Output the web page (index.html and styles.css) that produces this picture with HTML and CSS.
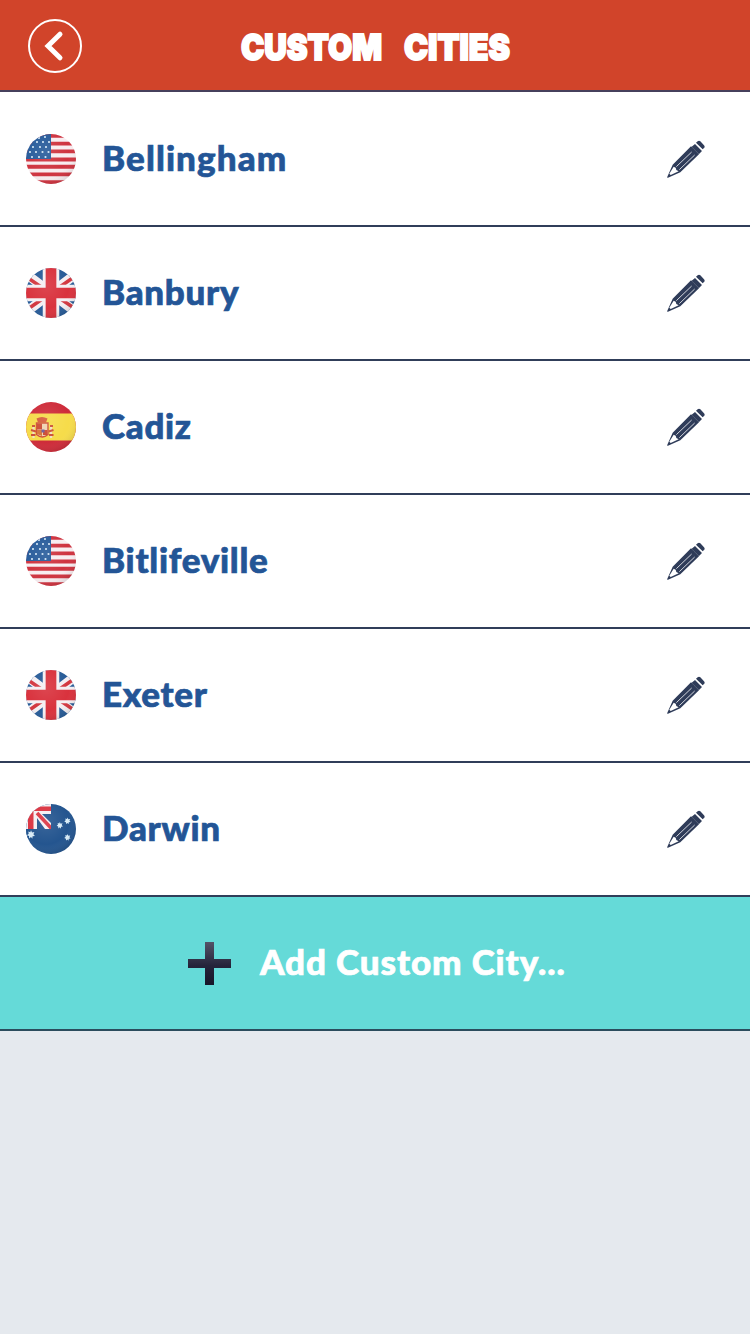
FILE: index.html
```html
<!DOCTYPE html>
<html lang="en">
<head>
	<meta charset="utf-8">
	<title>Custom Cities</title>
	<link rel="stylesheet" href="styles.css">
</head>
<body>
	<!-- shared icons -->
	<svg class="sprite" width="0" height="0">
		<defs>
			<clipPath id="round"><circle cx="25" cy="25" r="25"/></clipPath>
			<radialGradient id="shade" cx=".4" cy=".35" r=".7">
				<stop offset="0" stop-color="#fff" stop-opacity=".1"/>
				<stop offset=".65" stop-color="#fff" stop-opacity="0"/>
				<stop offset="1" stop-color="#000" stop-opacity=".12"/>
			</radialGradient>
			<linearGradient id="dark" x1="0" y1="0" x2="0" y2="1">
				<stop offset="0" stop-color="#535367"/>
				<stop offset=".55" stop-color="#25243a"/>
				<stop offset="1" stop-color="#171629"/>
			</linearGradient>
		</defs>
		<symbol id="us" viewBox="0 0 50 50">
			<g clip-path="url(#round)">
				<path fill="#f8edf0" d="M0 0h50v50H0z"/>
				<path stroke="#cf3440" stroke-width="3.85" d="M0 1.9h50M0 9.6h50M0 17.3h50M0 25.500h50M0 32.7h50M0 40.4h50M0 48.1h50"/>
				<path fill="#285c9b" d="M0 0h25v25H0z"/>
				<path stroke="#d3e6f5" stroke-width="2.2" stroke-linecap="round" d="M19 3h0M11 8h0M17 8h0M23 8h0M7 13h0M14 13h0M20 13h0M4 18h0M10 18h0M16.500 18h0M22.500 18h0M6 23h0M13 23h0M19.500 23h0M13 4h0"/>
				<path fill="url(#shade)" d="M0 0h50v50H0z"/>
			</g>
		</symbol>
		<symbol id="uk" viewBox="0 0 50 50">
			<g clip-path="url(#round)">
				<path fill="#285c98" d="M0 0h50v50H0z"/>
				<path stroke="#f4eff2" stroke-width="9.500" d="M-5 2l60 46M55 2L-5 48"/>
				<path stroke="#d33840" stroke-width="3.400" d="M2 10l14 9.500M48 40L34 30.500M48 9L33 19.500M2 41l15-10.500"/>
				<path stroke="#f4eff2" stroke-width="16.500" d="M25 0v50M0 25h50"/>
				<path stroke="#d9323d" stroke-width="10.700" d="M25 0v50M0 25h50"/>
				<path fill="url(#shade)" d="M0 0h50v50H0z"/>
			</g>
		</symbol>
		<symbol id="es" viewBox="0 0 50 50">
			<g clip-path="url(#round)">
				<path fill="#ce2c3a" d="M0 0h50v50H0z"/>
				<path fill="#f6dc4a" d="M0 11.500h50v27H0z"/>
				<path fill="#d65b39" d="M10.500 16.500q5.500-3 11 0l-1.500 4h-8z"/>
				<path fill="#f0d2b0" stroke="#cf5035" stroke-width="1.400" d="M10.500 21h11.500v11.500q-5.700 5-11.500 0z"/>
				<path fill="#cc4a32" d="M11 21.500h5v6h-5zM17 28h4.500v5H17z"/>
				<path fill="#d77537" d="M11 28h5v6l-5-2z"/>
				<path fill="#6e5a99" d="M15.500 27.500h3v3h-3z"/>
				<path fill="none" stroke="#f0e0c4" stroke-width="2.200" d="M7.500 24v12M25 24v12"/>
				<path fill="none" stroke="#cd5137" stroke-width="1.900" d="M5 28l5 1.500M5 33h4.500M22.500 29.500l5-1.500M23 33h4.500M6 24h3M24 24h3"/>
				<path fill="url(#shade)" d="M0 0h50v50H0z"/>
			</g>
		</symbol>
		<symbol id="au" viewBox="0 0 50 50">
			<g clip-path="url(#round)">
				<path fill="#24558f" d="M0 0h50v50H0z"/>
				<path fill="#f5eff2" d="M0 0h25v10H9.500v15H0z"/>
				<path fill="#db3441" d="M0 2.500h25V7H7.500v18H2V7H0z"/>
				<path fill="#f5eff2" d="M8 8h6l11 11v6h-6L11 14v11H8z"/>
				<path stroke="#db3441" stroke-width="3.600" d="M11 9l14.500 15.500"/>
				<path fill="#24558f" d="M25 2h10v32H0v-9h25z"/>
				<path id="star" fill="#d9ecf7" d="M5 26.300l1 2.200 2.400-.5-1 2.200 1.500 1.800-2.300.3-.3 2.400L5 33l-1.800 1.500-.2-2.400-2-.9 1.700-1.400-.4-2.200 2 .6z"/>
				<use href="#star" transform="translate(29.800 -3.100) scale(.8)"/>
				<use href="#star" transform="translate(37.500 -7.500) scale(.8)"/>
				<use href="#star" transform="translate(37.500 9) scale(.8)"/>
				<path fill="url(#shade)" d="M0 0h50v50H0z"/>
			</g>
		</symbol>
		<symbol id="pencil" viewBox="38 32 114 114">
			<path fill="#2f3c59" d="M130 36q4-4 8 0l11 12q4 4 0 8l-4 4-20-20zM122 44l21 21-9 9-22-22zM110 51l24 24-56 54-37 16q-4 1-2-3l16-36z"/>
			<path fill="#fff" d="M58 112l6 3 2 7 7 4-24 11-4-4z"/>
			<path stroke="#d2d5dd" stroke-width="3" d="M66 112l46-44M75 121l46-44"/>
		</symbol>
	</svg>

	<div class="header">
		<svg class="back" viewBox="0 0 54 54">
			<circle cx="27" cy="27" r="26"/>
			<path d="M32 15.200L20 27l12 11.800"/>
		</svg>
		<svg class="title" viewBox="0 0 300 60">
			<text x="16" y="43" textLength="141" lengthAdjust="spacingAndGlyphs">CUSTOM</text>
			<text x="179" y="43" textLength="106" lengthAdjust="spacingAndGlyphs">CITIES</text>
		</svg>
	</div>

	<div class="cities">
		<div class="city">
			<svg class="flag"><use href="#us"/></svg>
			<span class="name">Bellingham</span>
			<svg class="edit"><use href="#pencil"/></svg>
		</div>
		<div class="city">
			<svg class="flag"><use href="#uk"/></svg>
			<span class="name">Banbury</span>
			<svg class="edit"><use href="#pencil"/></svg>
		</div>
		<div class="city">
			<svg class="flag"><use href="#es"/></svg>
			<span class="name">Cadiz</span>
			<svg class="edit"><use href="#pencil"/></svg>
		</div>
		<div class="city">
			<svg class="flag"><use href="#us"/></svg>
			<span class="name">Bitlifeville</span>
			<svg class="edit"><use href="#pencil"/></svg>
		</div>
		<div class="city">
			<svg class="flag"><use href="#uk"/></svg>
			<span class="name">Exeter</span>
			<svg class="edit"><use href="#pencil"/></svg>
		</div>
		<div class="city">
			<svg class="flag"><use href="#au"/></svg>
			<span class="name">Darwin</span>
			<svg class="edit"><use href="#pencil"/></svg>
		</div>
	</div>

	<div class="add">
		<svg class="plus" viewBox="0 0 43 43">
			<path fill="url(#dark)" d="M17 0h9v17h17v9H26v17h-9V26H0v-9h17z"/>
		</svg>
		<span class="label">Add Custom City...</span>
	</div>
</body>
</html>
```
FILE: styles.css
```css
body {
	margin: 0;
	background-color: #e5e9ee;
	font-family: Lato, sans-serif;
	font-size: 35px;
	font-weight: 900;
}

.sprite {
	display: block;
}

.header {
	display: flex;
	align-items: center;
	height: 90px;
	padding: 0 28px;
	background-color: #d1442a;
	border-bottom: 2px solid #46405c;
}

.back {
	width: 54px;
	height: 54px;
	margin-top: 2px;
	fill: none;
	stroke: #fff;
	stroke-width: 2;
}

.back path {
	stroke-width: 5;
	stroke-linecap: round;
}

.title {
	width: 300px;
	height: 60px;
	margin-left: 143px;
	margin-top: 4px;
}

.title text {
	font-family: Inter, sans-serif;
	font-size: 36px;
	font-weight: 900;
	fill: #fff;
	stroke: #fff;
	stroke-width: 2;
}

.cities {
	padding-top: 1px;
	background-color: #fff;
}

.city {
	display: flex;
	align-items: center;
	box-sizing: border-box;
	height: 134px;
	padding: 0 45px 0 26px;
	background-color: #fff;
	border-bottom: 2px solid #303e59;
}

.flag {
	width: 50px;
	height: 50px;
}

.name {
	flex: 1;
	margin-left: 26px;
	padding-bottom: 4px;
	color: #235596;
	letter-spacing: 0.7px;
	-webkit-text-stroke: 0.7px #235596;
}

.city:first-child .name {
	letter-spacing: 1.1px;
}

.edit {
	width: 38px;
	height: 38px;
}

.add {
	display: flex;
	align-items: center;
	box-sizing: border-box;
	height: 134px;
	padding-left: 188px;
	background-color: #65dad8;
	border-bottom: 2px solid #2b4c5d;
	color: #fff;
}

.label {
	padding-bottom: 4px;
	letter-spacing: 0.9px;
	-webkit-text-stroke: 0.7px #fff;
}

.plus {
	width: 43px;
	height: 43px;
	margin-right: 29px;
}
```
